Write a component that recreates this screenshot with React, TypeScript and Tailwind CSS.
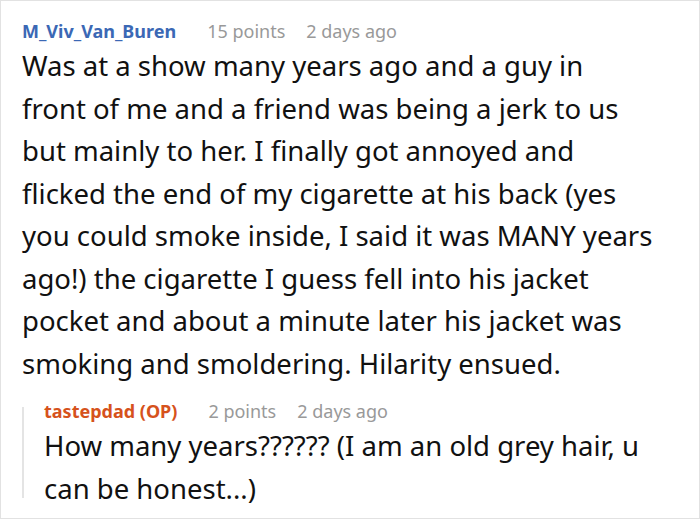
const font = { fontFamily: '"Noto Sans", "Open Sans", sans-serif' }

type Meta = { name: string; points: string; when: string; nameClass: string }

const BODY = [
  'Was at a show many years ago and a guy in',
  'front of me and a friend was being a jerk to us',
  'but mainly to her. I finally got annoyed and',
  'flicked the end of my cigarette at his back (yes',
  'you could smoke inside, I said it was MANY years',
  'ago!) the cigarette I guess fell into his jacket',
  'pocket and about a minute later his jacket was',
  'smoking and smoldering. Hilarity ensued.',
]

function Header({ name, points, when, nameClass }: Meta) {
  return (
    <div className="flex items-center h-[26px] text-[18px] leading-[26px]">
      <span className={`font-bold ${nameClass}`}>{name}</span>
      <span className="ml-[31px] text-[#999999]">{points}</span>
      <span className="ml-[21px] text-[#999999]">{when}</span>
    </div>
  )
}

export default function App() {
  return (
    <div style={font} className="w-[700px] h-[520px] bg-white">
      <div className="h-[519px] border border-[#e2e2e2] pl-[21px] pr-[8px] pt-[17px]">
        <Header name="M_Viv_Van_Buren" points="15 points" when="2 days ago" nameClass="text-[#3b68b5]" />
        <p className="mt-[1px] text-[27.5px] leading-[42.5px] text-[#111111]">
          {BODY.map((line, i) => (
            <span key={i} className="block whitespace-nowrap">{line}</span>
          ))}
        </p>
        <div className="mt-[13px] flex">
          <div className="w-[2px] bg-[#e4e4e4] mt-[9px] mb-[12px]" />
          <div className="pl-[20px] pr-[12px] flex-1">
            <Header name="tastepdad (OP)" points="2 points" when="2 days ago" nameClass="text-[#d6521c]" />
            <p className="mt-[1px] text-[27.5px] leading-[42.5px] text-[#111111]">
              How many years?????? (I am an old grey hair, u can be honest...)
            </p>
          </div>
        </div>
      </div>
    </div>
  )
}
